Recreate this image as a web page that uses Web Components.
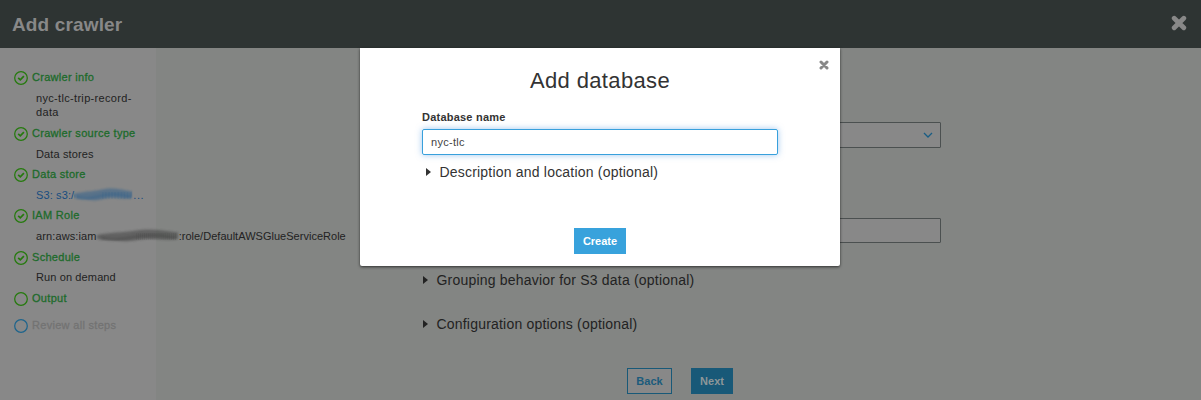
<!DOCTYPE html>
<html lang="en"><head><meta charset="utf-8"><title>Add crawler</title>
<style>html,body{margin:0;height:400px;overflow:hidden;background:#838583}</style></head>
<body>
<crawler-app></crawler-app>
<script>
function define(name, html) {
  const t = document.createElement('template');
  t.innerHTML = html;
  customElements.define(name, class extends HTMLElement {
    constructor() {
      super();
      this.attachShadow({ mode: 'open' }).appendChild(t.content.cloneNode(true));
    }
  });
}

define('close-icon', `
<style>:host{display:block;width:16px;height:16px;color:#888}svg{display:block;width:100%;height:100%}</style>
<svg viewBox="0 0 16 16"><path d="M3.2 3.2L12.8 12.8M12.8 3.2L3.2 12.8" stroke="currentColor" stroke-width="4.8" stroke-linecap="round"/></svg>`);

define('page-header', `
<style>:host{display:flex;height:48px;box-sizing:border-box;padding:0 14px 0 12px;align-items:center;justify-content:space-between;background:#2e3433}
h1{margin:2px 0 0;font-size:19px;line-height:24px;font-weight:700;color:#888;letter-spacing:.14px}
close-icon{width:16px;height:16px;margin-top:-2px}</style>
<h1><slot></slot></h1><close-icon></close-icon>`);

define('wizard-step', `
<style>:host{display:block;color:#1d6b2b}
.head{display:flex;align-items:center;gap:4px;height:14px;line-height:14px;letter-spacing:.3px;white-space:nowrap;-webkit-text-stroke:.3px currentColor}
svg{width:14px;height:14px;flex:none;color:#257a0d;margin-top:2px}
.tick{display:none}:host([done]) .tick{display:block}
:host([pending]) .head{color:#737373}:host([pending]) svg{color:#1d648c;margin-top:1px}
::slotted([slot=detail]){display:flex;margin:7px 0 0 22px;line-height:14px;color:#222;letter-spacing:.12px;white-space:nowrap}</style>
<div class="head"><svg viewBox="0 0 14 14" fill="none" stroke="currentColor"><circle cx="7" cy="7" r="6.3" stroke-width="1.25"/><path class="tick" d="M4.2 6.9L6.3 8.9L9.9 5.2" stroke-width="1.7"/></svg><span><slot></slot></span></div>
<slot name="detail"></slot>`);

define('smudge-mark', `
<style>:host{display:block;height:14px;flex:none}svg{display:block;width:100%;height:100%;overflow:visible}</style>
<svg viewBox="0 0 80 14" preserveAspectRatio="none"><defs>
<filter id="f" x="-10%" y="-40%" width="120%" height="180%"><feGaussianBlur stdDeviation="1 .9"/></filter>
<pattern id="p" width="2" height="2" patternUnits="userSpaceOnUse"><rect width="1" height="2" fill="currentColor"/></pattern></defs>
<path d="M0 6C12 3 24 4 38 1.5S66 2 79 3.5V10C64 12 52 8.5 40 11S15 12 0 10Z" fill="currentColor" opacity=".43" filter="url(#f)"/>
<path d="M4 9C18 12 28 9 42 7S66 7 77 9" fill="none" stroke="currentColor" stroke-width="3" opacity=".23" filter="url(#f)"/>
<path d="M38 4H77V11H38Z" fill="url(#p)" opacity=".13"/></svg>`);

define('step-nav', `
<style>:host{display:block;width:156px;height:352px;box-sizing:border-box;padding:22px 0 0 14px;background:#888;font-size:11px}
.steps{display:flex;flex-direction:column;gap:6px}
.wrap{letter-spacing:.32px!important}
.link{color:#174d80!important}
.blue{width:59px;color:#1d578c}.grey{width:82px;color:#333}
.late{margin-top:1px}.last{margin-top:7px}</style>
<div class="steps">
<wizard-step done>Crawler info<div slot="detail" class="wrap"><span>nyc-tlc-trip-record-<br>data</span></div></wizard-step>
<wizard-step done class="late">Crawler source type<div slot="detail">Data stores</div></wizard-step>
<wizard-step done>Data store<div slot="detail" class="link"><span>S3: s3:/</span><smudge-mark class="blue"></smudge-mark><span style="letter-spacing:.6px">...</span></div></wizard-step>
<wizard-step done>IAM Role<div slot="detail"><span>arn:aws:iam</span><smudge-mark class="grey"></smudge-mark><span style="letter-spacing:.02px">:role/DefaultAWSGlueServiceRole</span></div></wizard-step>
<wizard-step done class="late">Schedule<div slot="detail" style="margin-top:6px">Run on demand</div></wizard-step>
<wizard-step class="late">Output</wizard-step>
<wizard-step pending class="last">Review all steps</wizard-step>
</div>`);

define('disclosure-row', `
<style>:host{display:flex;align-items:center;height:18px;font-size:14px;line-height:18px;letter-spacing:.2px;white-space:nowrap;color:#222}
svg{width:5px;height:8px;margin:0 9px 0 4px;flex:none}</style>
<svg viewBox="0 0 5 8"><path d="M0 0L5 4L0 8Z" fill="currentColor"/></svg><slot></slot>`);

define('action-button', `
<style>:host{display:flex;align-items:center;justify-content:center;box-sizing:border-box;height:26px;font-size:11px;font-weight:700;background:#185978;color:#8d9799}
:host([outline]){background:#888;border:1px solid #185978;color:#1b5b7c}
:host([bright]){background:#38a2dc;color:#fff}</style><slot></slot>`);

define('output-form', `
<style>:host{display:block;flex:1;height:352px;box-sizing:border-box;padding:74px 260px 0 265px;background:#838583}
.box{box-sizing:border-box;border:1px solid #4b5050;border-radius:1px;background:#888;height:26px}
.select{display:flex;align-items:center;justify-content:flex-end;padding-right:7px}
.select svg{width:10px;height:8px}
.input{height:25px;margin-top:70px}
.g{margin:28px 0 0 -2.5px}.c{margin:26px 0 0 -2.5px}
.buttons{display:flex;gap:19px;margin:35px 0 0 206px}</style>
<div class="box select"><svg viewBox="0 0 10 8"><path d="M1 2L5 6L9 2" fill="none" stroke="#195d84" stroke-width="1.3"/></svg></div>
<div class="box input"></div>
<disclosure-row class="g">Grouping behavior for S3 data (optional)</disclosure-row>
<disclosure-row class="c">Configuration options (optional)</disclosure-row>
<div class="buttons"><action-button outline style="width:45px">Back</action-button><action-button style="width:42px">Next</action-button></div>`);

define('database-dialog', `
<style>:host{display:block;box-sizing:border-box;width:480px;height:218px;padding:19px 62px 0;background:#fff;border-radius:0 0 2px 2px;box-shadow:0 1px 3px rgba(0,0,0,.65);color:#333}
h2{margin:0;font-size:22px;line-height:28px;font-weight:400;letter-spacing:.35px;text-align:center}
close-icon{position:absolute;right:11px;top:12px;width:10px;height:10px}
label{display:block;margin-top:15px;font-size:11px;line-height:14px;font-weight:700;letter-spacing:.22px}
.field{box-sizing:border-box;width:356px;height:26px;margin-top:5px;padding:0 8px;border:1px solid #38a0dc;border-radius:2px;box-shadow:0 0 6px rgba(65,145,225,.5);font-size:11px;line-height:25px;letter-spacing:.3px;color:#444}
disclosure-row{margin:8px 0 0 -.5px;color:#333}
action-button{width:52px;margin:47px auto 0}</style>
<h2>Add database</h2><close-icon></close-icon>
<label>Database name</label><div class="field">nyc-tlc</div>
<disclosure-row>Description and location (optional)</disclosure-row>
<action-button bright>Create</action-button>`);

define('crawler-app', `
<style>:host{display:block;position:relative;width:1201px;height:400px;overflow:hidden;font-family:"Liberation Sans",Arial,sans-serif}
main{display:flex}step-nav{position:relative;z-index:1}
database-dialog{position:absolute;z-index:2;left:360px;top:48px}</style>
<page-header>Add crawler</page-header>
<main><step-nav></step-nav><output-form></output-form></main>
<database-dialog></database-dialog>`);
</script>
</body></html>
